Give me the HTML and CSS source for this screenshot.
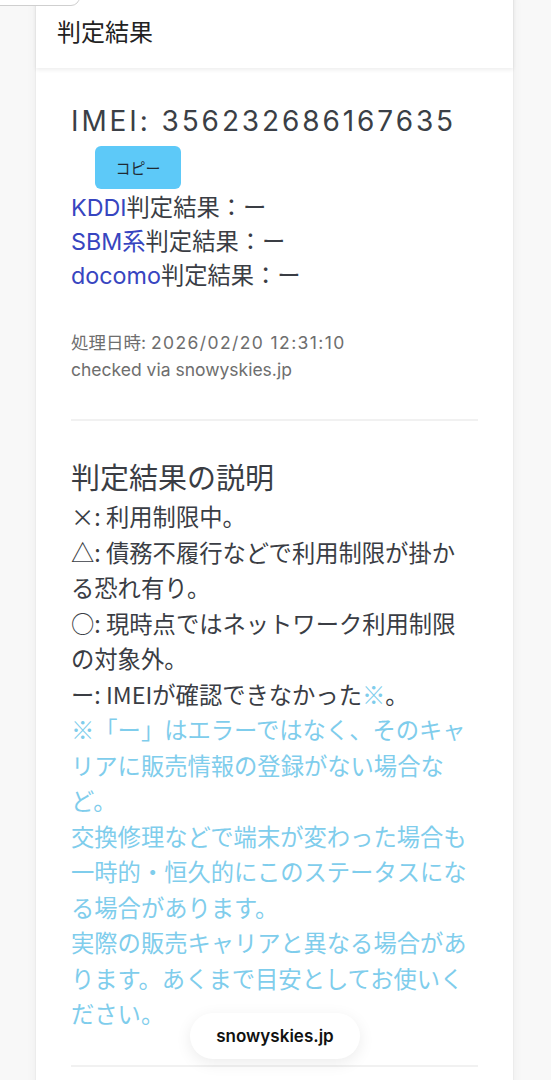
FILE: index.html
```html
<!DOCTYPE html>
<html lang="ja">
<head>
<meta charset="utf-8">
<title>判定結果</title>
<link rel="stylesheet" href="styles.css">
</head>
<body>
<div class="top-btn"></div>
<main class="card">
  <header class="card-header">判定結果</header>
  <section class="card-body">
    <h2 class="imei">IMEI: 356232686167635</h2>
    <button class="copy-btn" type="button">コピー</button>
    <ul class="results">
      <li><span class="carrier">KDDI</span>判定結果：ー</li>
      <li><span class="carrier">SBM系</span>判定結果：ー</li>
      <li><span class="carrier">docomo</span>判定結果：ー</li>
    </ul>
    <div class="meta">
      <p>処理日時: <span class="date">2026/02/20 12:31:10</span></p>
      <p>checked via snowyskies.jp</p>
    </div>
    <hr class="divider">
    <div class="explain">
      <h3 class="explain-title">判定結果の説明</h3>
      <p>×: 利用制限中。</p>
      <p>△: 債務不履行などで利用制限が掛かる恐れ有り。</p>
      <p>○: 現時点ではネットワーク利用制限の対象外。</p>
      <p>ー: IMEIが確認できなかった<span class="note-mark">※</span>。</p>
      <p class="note">※「ー」はエラーではなく、そのキャリアに販売情報の登録がない場合など。</p>
      <p class="note">交換修理などで端末が変わった場合も一時的・恒久的にこのステータスになる場合があります。</p>
      <p class="note">実際の販売キャリアと異なる場合があります。あくまで目安としてお使いください。</p>
    </div>
    <hr class="divider divider-end">
  </section>
</main>
<div class="url-pill">snowyskies.jp</div>
</body>
</html>
```
FILE: styles.css
```css
html, body {
  margin: 0;
  padding: 0;
}
body {
  background: #f8f8f8;
  font-family: Inter, "Noto Sans CJK JP", sans-serif;
  color: #3a3d44;
  overflow: hidden;
  height: 1080px;
  position: relative;
}
.top-btn {
  position: absolute;
  left: -12px;
  top: -40px;
  width: 90px;
  height: 44px;
  background: #fff;
  border: 1px solid #cfcfcf;
  border-radius: 9px;
  z-index: 2;
}
.card {
  margin: -8px 37px 0 35px;
  background: #fff;
  border: 1px solid #ececec;
  border-radius: 8px;
  box-shadow: 0 0 10px rgba(0, 0, 0, 0.05);
  height: 1200px;
}
.card-header {
  height: 75px;
  box-sizing: border-box;
  padding: 0 0 0 21px;
  display: flex;
  align-items: center;
  font-family: "Noto Sans CJK JP", sans-serif;
  font-size: 24px;
  color: #222;
  box-shadow: 0 2px 4px rgba(0, 0, 0, 0.07);
  position: relative;
}
.card-body {
  padding: 35px 35px 0 35px;
}
.imei {
  margin: 0;
  font-size: 28px;
  line-height: 36px;
  font-weight: 400;
  color: #3b3f46;
  letter-spacing: 2.9px;
}
.copy-btn {
  display: block;
  margin: 7px 0 0 24px;
  width: 86px;
  height: 43px;
  border: none;
  border-radius: 6px;
  background: #5dc9f8;
  color: #1f2a33;
  font-family: "Noto Sans CJK JP", sans-serif;
  font-size: 15px;
  padding: 0;
}
.results {
  list-style: none;
  margin: 2px 0 0;
  padding: 0;
  font-size: 23.3px;
  line-height: 34px;
}
.carrier {
  color: #3745c0;
}
.meta {
  margin-top: 36px;
  font-size: 17.5px;
  line-height: 27px;
  color: #6e6e6e;
}
.meta p {
  margin: 0;
}
.date {
  letter-spacing: 1.4px;
}
.divider {
  border: none;
  border-top: 2px solid #f1f1f1;
  margin: 36px 0 0;
}
.explain {
  padding-top: 36px;
  width: 400px;
  font-family: "Noto Sans CJK JP", sans-serif;
  font-size: 23.3px;
  line-height: 35.5px;
}
.explain p {
  margin: 0;
}
.explain-title {
  margin: 0 0 4px;
  font-size: 29px;
  line-height: 38px;
  font-weight: 400;
}
.note-mark,
.note {
  color: #7fcdec;
}
.divider-end {
  margin-top: 33px;
}
.url-pill {
  position: absolute;
  left: 190px;
  top: 1013px;
  width: 170px;
  height: 46px;
  border-radius: 23px;
  background: #fff;
  box-shadow: 0 4px 16px rgba(0, 0, 0, 0.08);
  display: flex;
  align-items: center;
  justify-content: center;
  font-family: Inter, "Liberation Sans", sans-serif;
  font-weight: 600;
  font-size: 17px;
  color: #111;
  z-index: 3;
}
```
